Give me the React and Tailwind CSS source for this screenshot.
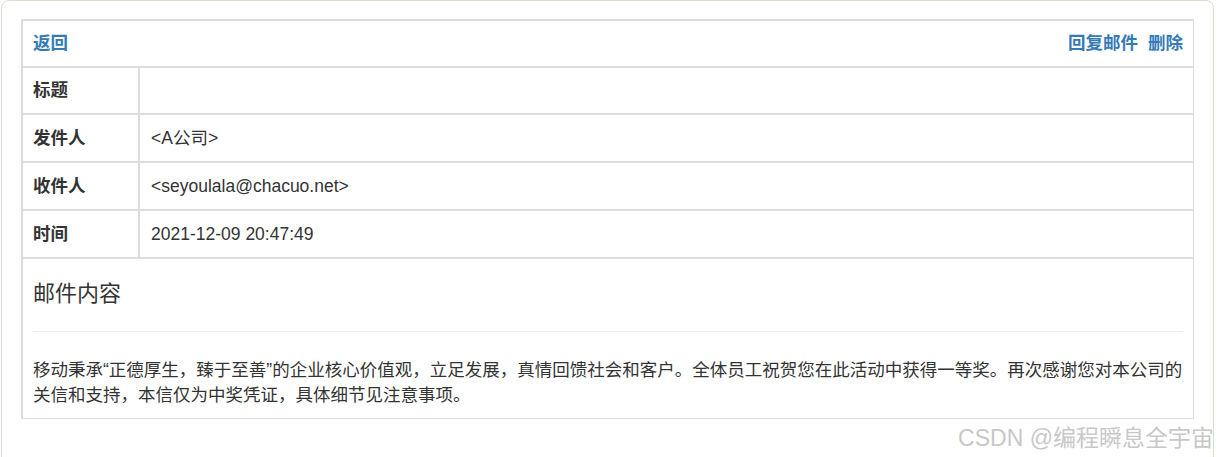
import React from "react";

const font = {
  fontFamily: '"Liberation Sans", "Noto Sans CJK SC", sans-serif',
};

const rows = [
  { label: "标题", value: "" },
  { label: "发件人", value: "<A公司>" },
  { label: "收件人", value: "<seyoulala@chacuo.net>" },
  { label: "时间", value: "2021-12-09 20:47:49" },
];

const MailRow = ({ label, value, first }) => (
  <div
    className={
      first
        ? "flex border-t-2 border-[#dddddd] h-[47px]"
        : "flex border-t-2 border-[#dddddd] h-[48px]"
    }
  >
    <div className="w-[115px] px-[10px] flex items-center font-bold">
      {label}
    </div>
    <div className="flex-1 border-l-2 border-[#dddddd] px-[11px] flex items-center">
      {value}
    </div>
  </div>
);

const App = () => {
  return (
    <div
      className="relative h-[457px] bg-white overflow-hidden pl-px text-[#333333] text-[17.5px] leading-[25px]"
      style={font}
    >
      <div className="w-[1213px] h-[480px] border border-[#d7e0cd] rounded-lg bg-white pt-[18px] px-[19px]">
        <div className="border-t-2 border-l-2 border-r border-b border-[#dddddd]">
          <div className="h-[45px] px-[10px] flex items-center justify-between font-bold text-[#337ab7]">
            <a href="#">返回</a>
            <div className="flex gap-[10px]">
              <a href="#">回复邮件</a>
              <a href="#">删除</a>
            </div>
          </div>
          {rows.map((r, i) => (
            <MailRow key={r.label} label={r.label} value={r.value} first={i === 0} />
          ))}
          <div className="border-t-2 border-[#dddddd] px-[10px] pt-[22px] pb-[10px]">
            <h4 className="text-[22px] leading-[25px] font-normal">邮件内容</h4>
            <hr className="mt-[25px] mb-[26px] border-[#eeeeee]" />
            <p>
              移动秉承“正德厚生，臻于至善”的企业核心价值观，立足发展，真情回馈社会和客户。全体员工祝贺您在此活动中获得一等奖。再次感谢您对本公司的关信和支持，本信仅为中奖凭证，具体细节见注意事项。
            </p>
          </div>
        </div>
      </div>
      <div className="absolute right-[3px] bottom-[6px] text-[23px] leading-[26px] text-[#c8c8c8] pointer-events-none">
        CSDN @编程瞬息全宇宙
      </div>
    </div>
  );
};

export default App;
